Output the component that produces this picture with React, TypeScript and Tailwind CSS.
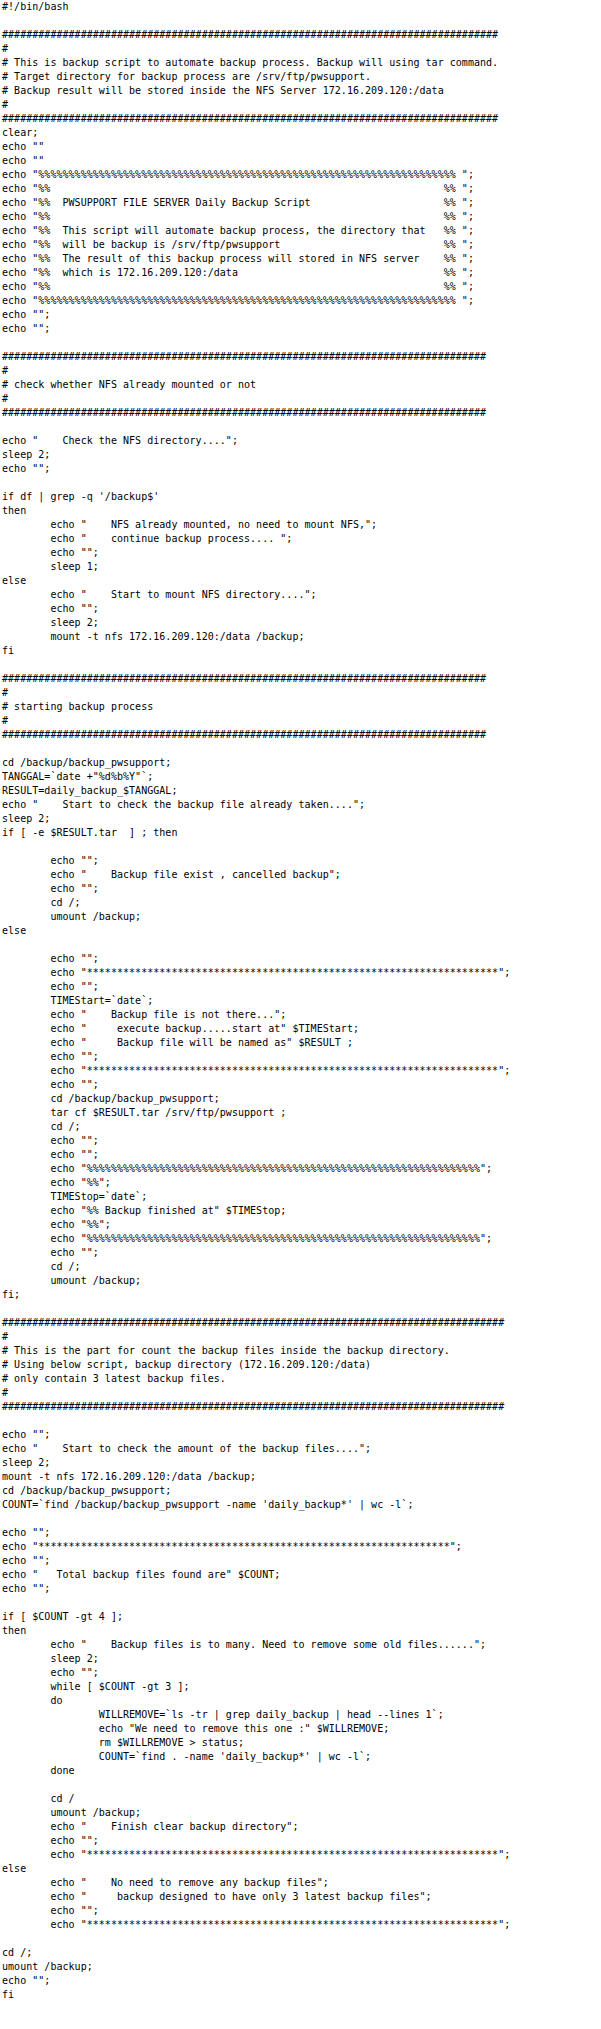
const hash = (n: number) => '#'.repeat(n);
const star = '*'.repeat(68);
const box = (text: string) => `echo "%%  ${text}`.padEnd(73, ' ') + '%% ";';

const SCRIPT = `#!/bin/bash

${hash(82)}
#
# This is backup script to automate backup process. Backup will using tar command.
# Target directory for backup process are /srv/ftp/pwsupport.
# Backup result will be stored inside the NFS Server 172.16.209.120:/data
#
${hash(82)}
clear;
echo ""
echo ""
echo "${'%'.repeat(69)} ";
${box('')}
${box('PWSUPPORT FILE SERVER Daily Backup Script')}
${box('')}
${box('This script will automate backup process, the directory that')}
${box('will be backup is /srv/ftp/pwsupport')}
${box('The result of this backup process will stored in NFS server')}
${box('which is 172.16.209.120:/data')}
${box('')}
echo "${'%'.repeat(69)} ";
echo "";
echo "";

${hash(80)}
#
# check whether NFS already mounted or not
#
${hash(80)}

echo "    Check the NFS directory....";
sleep 2;
echo "";

if df | grep -q '/backup$'
then
\techo "    NFS already mounted, no need to mount NFS,";
\techo "    continue backup process.... ";
\techo "";
\tsleep 1;
else
\techo "    Start to mount NFS directory....";
\techo "";
\tsleep 2;
\tmount -t nfs 172.16.209.120:/data /backup;
fi

${hash(80)}
#
# starting backup process
#
${hash(80)}

cd /backup/backup_pwsupport;
TANGGAL=\`date +"%d%b%Y"\`;
RESULT=daily_backup_$TANGGAL;
echo "    Start to check the backup file already taken....";
sleep 2;
if [ -e $RESULT.tar  ] ; then

\techo "";
\techo "    Backup file exist , cancelled backup";
\techo "";
\tcd /;
\tumount /backup;
else

\techo "";
\techo "${star}";
\techo "";
\tTIMEStart=\`date\`;
\techo "    Backup file is not there...";
\techo "     execute backup.....start at" $TIMEStart;
\techo "     Backup file will be named as" $RESULT ;
\techo "";
\techo "${star}";
\techo "";
\tcd /backup/backup_pwsupport;
\ttar cf $RESULT.tar /srv/ftp/pwsupport ;
\tcd /;
\techo "";
\techo "";
\techo "${'%'.repeat(65)}";
\techo "%%";
\tTIMEStop=\`date\`;
\techo "%% Backup finished at" $TIMEStop;
\techo "%%";
\techo "${'%'.repeat(65)}";
\techo "";
\tcd /;
\tumount /backup;
fi;

${hash(83)}
#
# This is the part for count the backup files inside the backup directory.
# Using below script, backup directory (172.16.209.120:/data)
# only contain 3 latest backup files.
#
${hash(83)}

echo "";
echo "    Start to check the amount of the backup files....";
sleep 2;
mount -t nfs 172.16.209.120:/data /backup;
cd /backup/backup_pwsupport;
COUNT=\`find /backup/backup_pwsupport -name 'daily_backup*' | wc -l\`;

echo "";
echo "${star}";
echo "";
echo "   Total backup files found are" $COUNT;
echo "";

if [ $COUNT -gt 4 ];
then
\techo "    Backup files is to many. Need to remove some old files......";
\tsleep 2;
\techo "";
\twhile [ $COUNT -gt 3 ];
\tdo
\t\tWILLREMOVE=\`ls -tr | grep daily_backup | head --lines 1\`;
\t\techo "We need to remove this one :" $WILLREMOVE;
\t\trm $WILLREMOVE > status;
\t\tCOUNT=\`find . -name 'daily_backup*' | wc -l\`;
\tdone

\tcd /
\tumount /backup;
\techo "    Finish clear backup directory";
\techo "";
\techo "${star}";
else
\techo "    No need to remove any backup files";
\techo "     backup designed to have only 3 latest backup files";
\techo "";
\techo "${star}";

cd /;
umount /backup;
echo "";
fi`.replace(/\t/g, '        ');

const App = () => {
  return (
    <div className="min-h-[2029px] w-full bg-white">
      <pre className="pl-[2px] font-['DejaVu_Sans_Mono',monospace] text-[10px] leading-[14px] tracking-[0.03px] text-black whitespace-pre">
        {SCRIPT}
      </pre>
    </div>
  );
};

export default App;
